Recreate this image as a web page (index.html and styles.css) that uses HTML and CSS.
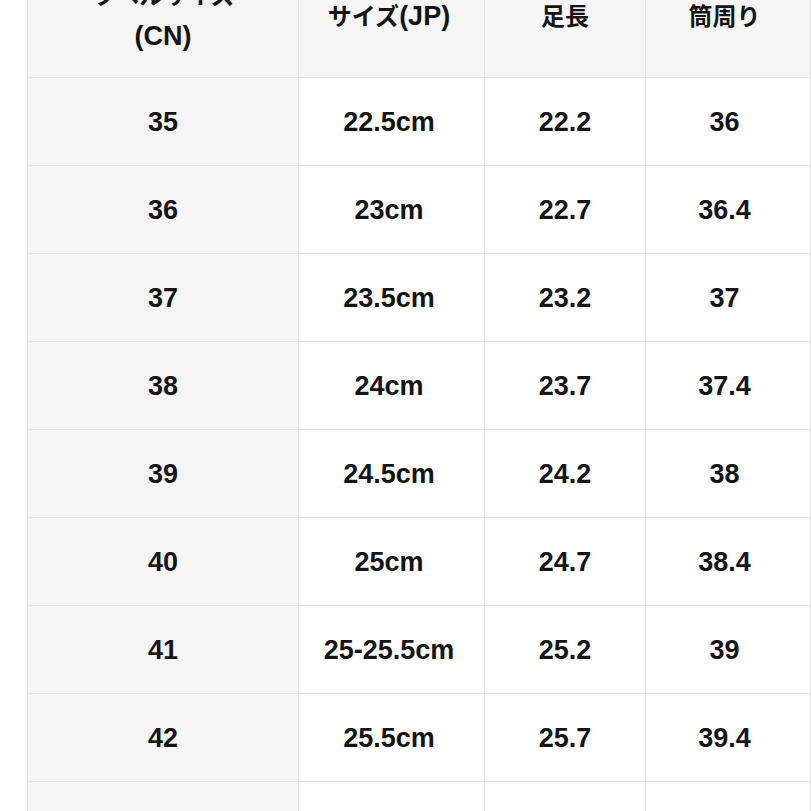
FILE: index.html
```html
<!DOCTYPE html>
<html lang="ja">
<head>
<meta charset="utf-8">
<title>サイズ表</title>
<link rel="stylesheet" href="styles.css">
</head>
<body>
<table class="size-table">
  <colgroup>
    <col class="c1"><col class="c2"><col class="c3"><col class="c4">
  </colgroup>
  <thead>
    <tr>
      <th class="label">ラベルサイズ<br><span class="lat">(CN)</span></th>
      <th class="jp">サイズ<span class="lat">(JP)</span></th>
      <th>足長</th>
      <th class="girth">筒周り</th>
    </tr>
  </thead>
  <tbody>
    <tr><td class="label">35</td><td class="jp">22.5cm</td><td>22.2</td><td class="girth">36</td></tr>
    <tr><td class="label">36</td><td class="jp">23cm</td><td>22.7</td><td class="girth">36.4</td></tr>
    <tr><td class="label">37</td><td class="jp">23.5cm</td><td>23.2</td><td class="girth">37</td></tr>
    <tr><td class="label">38</td><td class="jp">24cm</td><td>23.7</td><td class="girth">37.4</td></tr>
    <tr><td class="label">39</td><td class="jp">24.5cm</td><td>24.2</td><td class="girth">38</td></tr>
    <tr><td class="label">40</td><td class="jp">25cm</td><td>24.7</td><td class="girth">38.4</td></tr>
    <tr><td class="label">41</td><td class="jp">25-25.5cm</td><td>25.2</td><td class="girth">39</td></tr>
    <tr><td class="label">42</td><td class="jp">25.5cm</td><td>25.7</td><td class="girth">39.4</td></tr>
    <tr><td class="label">43</td><td class="jp">26cm</td><td>26.2</td><td class="girth">40</td></tr>
  </tbody>
</table>
</body>
</html>
```
FILE: styles.css
```css
html, body {
  margin: 0;
  padding: 0;
  background: #ffffff;
  overflow: hidden;
}

body {
  font-family: "Liberation Sans", "Noto Sans CJK JP", sans-serif;
  color: #141414;
}

.size-table {
  border-collapse: collapse;
  table-layout: fixed;
  width: 783px;
  margin: -45px 0 0 27px;
}

.c1 { width: 271px; }
.c2 { width: 186px; }
.c3 { width: 161px; }
.c4 { width: 165px; }

.size-table th,
.size-table td {
  border: 1px solid #e4e4e4;
  text-align: center;
  vertical-align: middle;
  padding: 0;
  font-weight: bold;
  line-height: 40px;
}

.size-table .jp {
  padding-right: 5px;
}

.size-table .girth {
  padding-right: 7px;
}

.size-table th {
  height: 121px;
  background: #f5f5f5;
  font-size: 24px;
}

.size-table th .lat {
  font-size: 27px;
}

.size-table td {
  height: 87px;
  font-size: 27px;
  background: #ffffff;
}

.size-table td.label {
  background: #f5f5f5;
}
```
